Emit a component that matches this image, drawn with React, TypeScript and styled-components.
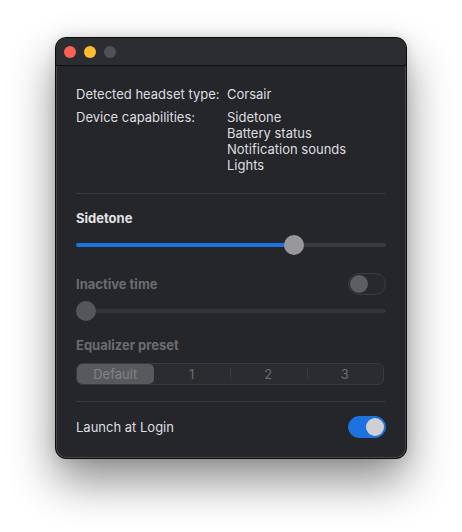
import React from "react";
import styled, { createGlobalStyle } from "styled-components";

const Global = createGlobalStyle`
  html, body { margin: 0; padding: 0; background: #ffffff; }
  body { font-family: Inter, "Noto Sans", "Liberation Sans", sans-serif; -webkit-font-smoothing: antialiased; }
`;

const Page = styled.div`
  width: 462px;
  height: 532px;
  padding: 37px 0 0 55px;
  box-sizing: border-box;
`;

const Window = styled.div`
  width: 352px;
  height: 422px;
  box-sizing: border-box;
  background: #25262a;
  border: 1px solid #0b0b0c;
  border-radius: 11px;
  box-shadow: inset 0 0 0 1px rgba(255, 255, 255, 0.16), 0 22px 45px rgba(0, 0, 0, 0.45),
    0 0 12px rgba(0, 0, 0, 0.12);
  overflow: hidden;
  display: flex;
  flex-direction: column;
`;

const TitleBar = styled.div`
  height: 28px;
  flex: none;
  background: #2c2d31;
  border-bottom: 1px solid #0e0e10;
  display: flex;
  align-items: center;
  gap: 8px;
  padding-left: 8px;
  padding-top: 1px;
  box-sizing: border-box;
  border-top-left-radius: 10px;
  border-top-right-radius: 10px;
`;

const Light = styled.span<{ $c: string }>`
  width: 12px;
  height: 12px;
  border-radius: 50%;
  background: ${(p) => p.$c};
`;

const Content = styled.div`
  padding: 20px 20px 0 20px;
  display: flex;
  flex-direction: column;
  font-size: 13px;
  line-height: 16px;
  color: #dedee0;
`;

const InfoRow = styled.div<{ $mt?: number }>`
  display: grid;
  grid-template-columns: 151px 1fr;
  margin-top: ${(p) => p.$mt ?? 0}px;
`;

const Values = styled.div`
  display: flex;
  flex-direction: column;
`;

const Separator = styled.div<{ $mt: number }>`
  height: 1px;
  background: #393a3e;
  margin-top: ${(p) => p.$mt}px;
`;

const Heading = styled.div<{ $disabled?: boolean; $mt: number }>`
  font-weight: 700;
  margin-top: ${(p) => p.$mt}px;
  color: ${(p) => (p.$disabled ? "#6b6c70" : "#e2e2e4")};
`;

const HeadingRow = styled.div<{ $mt: number }>`
  display: flex;
  justify-content: space-between;
  align-items: center;
  margin-top: ${(p) => p.$mt}px;
`;

const SliderWrap = styled.div<{ $mt: number }>`
  position: relative;
  height: 20px;
  margin-top: ${(p) => p.$mt}px;
  display: flex;
  align-items: center;
`;

const Track = styled.div<{ $disabled?: boolean }>`
  width: 100%;
  height: 4px;
  border-radius: 2px;
  background: ${(p) => (p.$disabled ? "#333438" : "#3a3b3f")};
  overflow: hidden;
`;

const Fill = styled.div`
  height: 100%;
  background: #1d72df;
`;

const Thumb = styled.div<{ $disabled?: boolean }>`
  position: absolute;
  top: 0;
  width: 20px;
  height: 20px;
  margin-left: -10px;
  border-radius: 50%;
  background: ${(p) => (p.$disabled ? "#55565a" : "#98989b")};
`;

const Toggle = styled.div<{ $on?: boolean }>`
  width: 38px;
  height: 22px;
  box-sizing: border-box;
  border-radius: 11px;
  padding: 1px;
  display: flex;
  justify-content: ${(p) => (p.$on ? "flex-end" : "flex-start")};
  background: ${(p) => (p.$on ? "#1d72df" : "#28292d")};
  border: 1px solid ${(p) => (p.$on ? "#1d72df" : "#3b3c40")};
`;

const Knob = styled.span<{ $on?: boolean }>`
  width: 18px;
  height: 18px;
  border-radius: 50%;
  background: ${(p) => (p.$on ? "#d0d0d2" : "#5d5e62")};
`;

const Segmented = styled.div`
  margin-top: 10px;
  height: 22px;
  width: 308px;
  box-sizing: border-box;
  display: grid;
  grid-template-columns: repeat(4, 1fr);
  border: 1px solid #3a3b3f;
  border-radius: 6px;
  background: #2b2c30;
  overflow: hidden;
`;

const Segment = styled.div<{ $selected?: boolean; $divider?: boolean }>`
  display: flex;
  align-items: center;
  justify-content: center;
  font-size: 13px;
  color: ${(p) => (p.$selected ? "#818286" : "#6c6d71")};
  background: ${(p) => (p.$selected ? "#58595d" : "transparent")};
  border-radius: ${(p) => (p.$selected ? "5px" : "0")};
  position: relative;
  &::before {
    content: "";
    display: ${(p) => (p.$divider ? "block" : "none")};
    position: absolute;
    left: 0;
    top: 5px;
    bottom: 5px;
    width: 1px;
    background: #3a3b3f;
  }
`;

const LaunchRow = styled.div`
  display: flex;
  justify-content: space-between;
  align-items: center;
  margin-top: 14px;
`;

const Label = styled.span`
  color: #dedee0;
`;

export default function App() {
  const sidetone = 70.3;
  return (
    <>
      <Global />
      <Page>
        <Window>
          <TitleBar>
            <Light $c="#fe5f57" />
            <Light $c="#febc2e" />
            <Light $c="#505155" />
          </TitleBar>
          <Content>
            <InfoRow>
              <span>Detected headset type:</span>
              <span>Corsair</span>
            </InfoRow>
            <InfoRow $mt={7}>
              <span>Device capabilities:</span>
              <Values>
                <span>Sidetone</span>
                <span>Battery status</span>
                <span>Notification sounds</span>
                <span>Lights</span>
              </Values>
            </InfoRow>
            <Separator $mt={20} />
            <Heading $mt={16}>Sidetone</Heading>
            <SliderWrap $mt={9}>
              <Track>
                <Fill style={{ width: `${sidetone}%` }} />
              </Track>
              <Thumb style={{ left: `${sidetone}%` }} />
            </SliderWrap>
            <HeadingRow $mt={18}>
              <Heading $mt={0} $disabled>
                Inactive time
              </Heading>
              <Toggle>
                <Knob />
              </Toggle>
            </HeadingRow>
            <SliderWrap $mt={6}>
              <Track $disabled />
              <Thumb $disabled style={{ left: "10px" }} />
            </SliderWrap>
            <Heading $mt={16} $disabled>
              Equalizer preset
            </Heading>
            <Segmented>
              <Segment $selected>Default</Segment>
              <Segment>1</Segment>
              <Segment $divider>2</Segment>
              <Segment $divider>3</Segment>
            </Segmented>
            <Separator $mt={16} />
            <LaunchRow>
              <Label>Launch at Login</Label>
              <Toggle $on>
                <Knob $on />
              </Toggle>
            </LaunchRow>
          </Content>
        </Window>
      </Page>
    </>
  );
}
